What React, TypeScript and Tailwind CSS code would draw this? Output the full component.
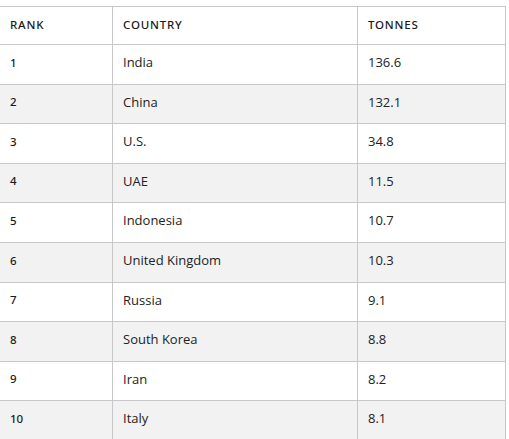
const rows: [number, string, string][] = [
  [1, "India", "136.6"],
  [2, "China", "132.1"],
  [3, "U.S.", "34.8"],
  [4, "UAE", "11.5"],
  [5, "Indonesia", "10.7"],
  [6, "United Kingdom", "10.3"],
  [7, "Russia", "9.1"],
  [8, "South Korea", "8.8"],
  [9, "Iran", "8.2"],
  [10, "Italy", "8.1"],
];

const labelFont = { fontFamily: '"Noto Sans", "Open Sans", sans-serif' };

export default function App() {
  return (
    <div
      className="w-[509px] h-[439px] overflow-hidden bg-white pt-[6px] text-[#222]"
      style={{ fontFamily: '"Open Sans", "Noto Sans", sans-serif' }}
    >
      <div className="w-[506px] border-t border-r border-[#c8c8c8]">
        {/* Header */}
        <div
          className="grid grid-cols-[113px_245px_1fr] h-[38px] border-b border-[#c8c8c8] text-[11.5px] font-medium tracking-[0.07em] text-[#1a1a1a]"
          style={labelFont}
        >
          <div className="flex items-center pl-[10px] pb-[1px] border-r border-[#c8c8c8]">RANK</div>
          <div className="flex items-center pl-[10px] pb-[1px] border-r border-[#c8c8c8]">COUNTRY</div>
          <div className="flex items-center pl-[10px] pb-[1px]">TONNES</div>
        </div>

        {/* Rows */}
        {rows.map(([rank, country, tonnes], i) => (
          <div
            key={rank}
            className={`grid grid-cols-[113px_245px_1fr] h-[39.6px] border-b border-[#c8c8c8] text-[13px] ${
              i % 2 === 1 ? "bg-[#f2f2f2]" : "bg-white"
            }`}
          >
            <div
              className="flex items-center pl-[10px] pb-[4px] border-r border-[#c8c8c8] text-[11.5px] font-medium text-[#1a1a1a]"
              style={labelFont}
            >
              {rank}
            </div>
            <div className="flex items-center pl-[10px] pb-[3px] border-r border-[#c8c8c8]">{country}</div>
            <div className="flex items-center pl-[10px] pb-[3px]">{tonnes}</div>
          </div>
        ))}
      </div>
    </div>
  );
}
